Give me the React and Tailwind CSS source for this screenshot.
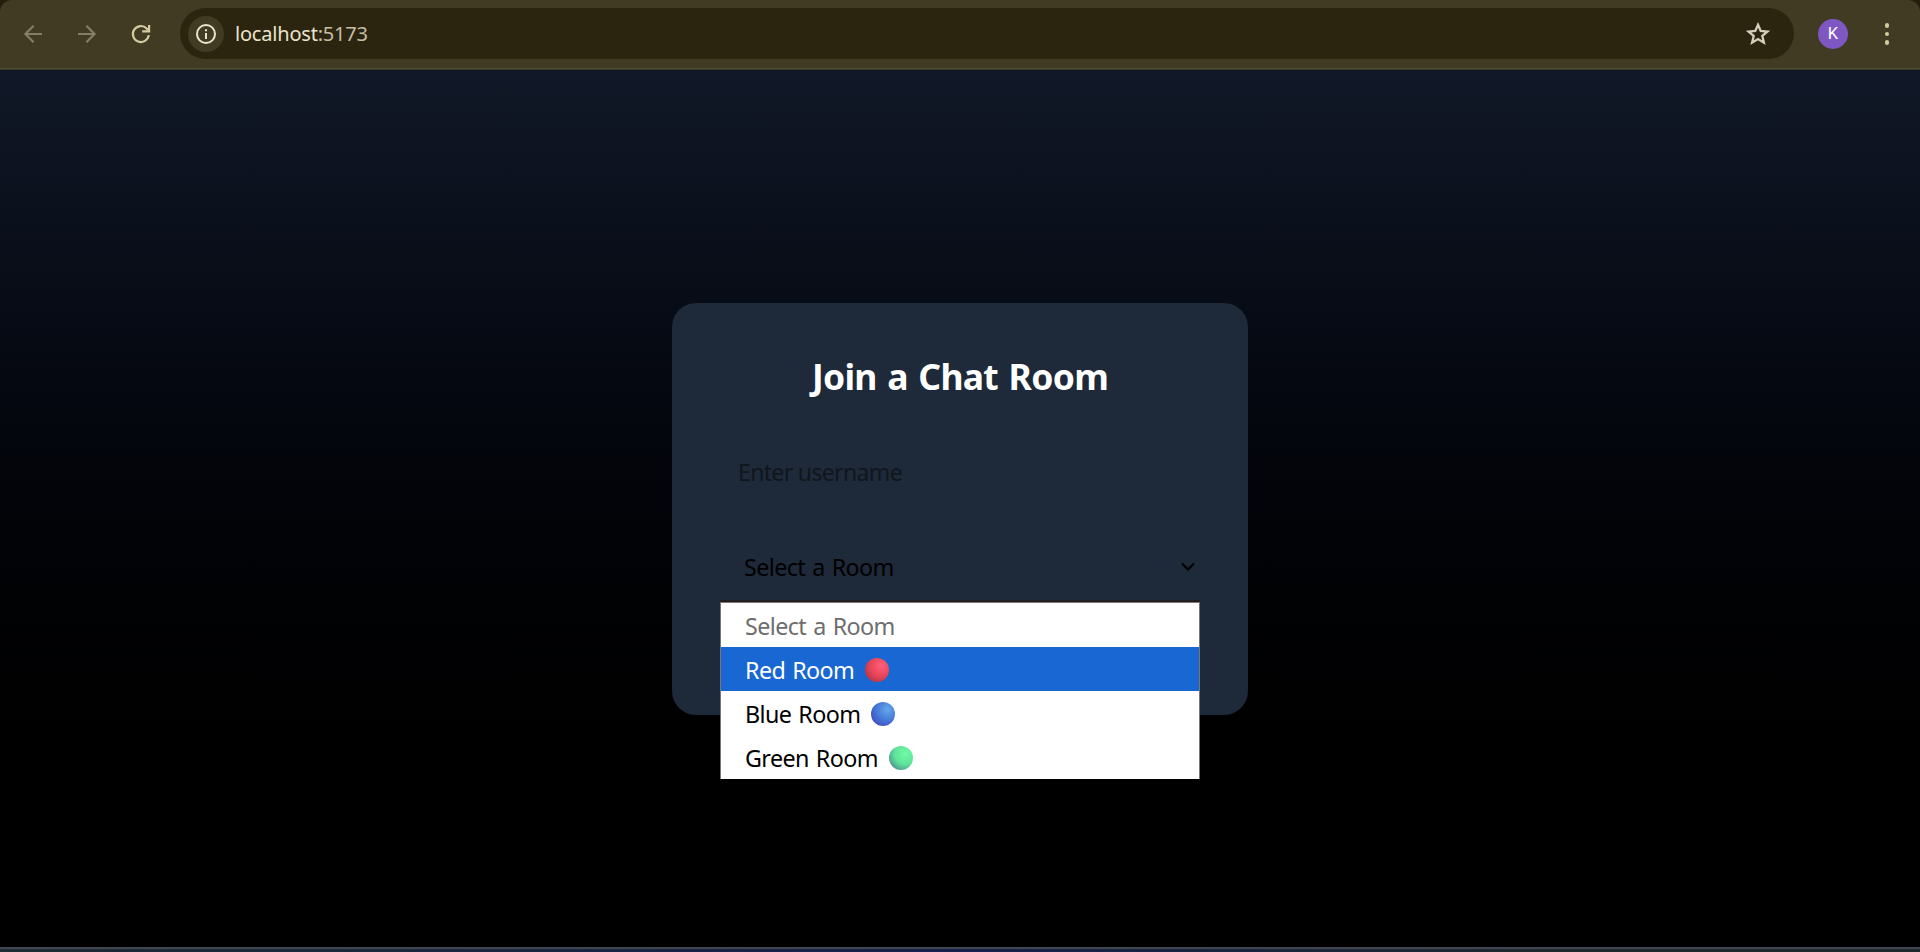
import React from "react";

const rooms = [
  { name: "Red Room", ball: "red" },
  { name: "Blue Room", ball: "blue" },
  { name: "Green Room", ball: "green" },
];

function Ball({ kind }) {
  const colours = {
    red: ["#ff6078", "#e8455a", "#b8364a"],
    blue: ["#64a8ea", "#4479d6", "#4450c4"],
    green: ["#72fba4", "#5fe39a", "#4f9a90"],
  }[kind];
  return (
    <svg width="24" height="24" viewBox="0 0 24 24" className="shrink-0">
      <defs>
        <radialGradient id={kind} cx="0.68" cy="0.32" r="0.75">
          <stop offset="0" stopColor={colours[0]} />
          <stop offset="0.6" stopColor={colours[1]} />
          <stop offset="1" stopColor={colours[2]} />
        </radialGradient>
      </defs>
      <circle cx="12" cy="12" r="12" fill={`url(#${kind})`} />
    </svg>
  );
}

function Toolbar() {
  return (
    <div className="h-[70px] shrink-0 bg-[#241f0d]">
      <header className="flex h-[69px] items-center rounded-t-[12px] border-b border-[#4c4a3c] bg-[#413b24] pl-[19px]">
        <svg width="28" height="28" viewBox="0 0 28 28" fill="none" stroke="#857d64" strokeWidth="2.2" className="mr-[26px]">
          <path d="M23 14H6.5M14.6 5.7 6.4 14 14.6 22.3" />
        </svg>
        <svg width="28" height="28" viewBox="0 0 28 28" fill="none" stroke="#857d64" strokeWidth="2.2" className="mr-[26px]">
          <path d="M5 14H21.5M13.4 5.7 21.6 14 13.4 22.3" />
        </svg>
        <svg width="28" height="28" viewBox="0 0 28 28" fill="none" stroke="#d4caa0" strokeWidth="2.2" className="mr-[25px]">
          <path d="M21.8 15.2A8 8 0 1 1 19.6 8.4L21.8 10.8" />
          <path d="M22.1 5V11.4H15.2" />
        </svg>
        <div className="mb-px flex h-[51px] w-[1614px] items-center rounded-full bg-[#2b250f] pt-px pl-2">
          <span className="flex size-9 items-center justify-center rounded-full bg-[#413b24]">
            <svg width="20" height="20" viewBox="0 0 20 20" fill="none" stroke="#eae3cd" strokeWidth="2">
              <circle cx="10" cy="10" r="9" />
              <path d="M10 9V15M10 5.2V7.2" />
            </svg>
          </span>
          <span className="ml-[11px] flex-1 font-['Noto_Sans',sans-serif] text-[20px] tracking-[-0.2px] text-[#eae3cd]">
            localhost<span className="text-[#c5bea4]">:5173</span>
          </span>
          <svg width="26" height="26" viewBox="0 0 26 26" fill="none" stroke="#d5cebd" strokeWidth="2.3" className="mr-[23px]">
            <path d="M13 3.8 15.7 10 22.4 10.6 17.3 15 18.9 21.7 13 18.1 7.1 21.7 8.7 15 3.6 10.6 10.3 10Z" />
          </svg>
        </div>
        <span className="ml-6 flex size-[30px] items-center justify-center rounded-full bg-[#7e57c2] font-[Roboto,sans-serif] text-[16.5px] text-white">
          K
        </span>
        <span className="ml-[37px] flex flex-col gap-1">
          <i className="size-[4.4px] rounded-full bg-[#d4caa0]" />
          <i className="size-[4.4px] rounded-full bg-[#d4caa0]" />
          <i className="size-[4.4px] rounded-full bg-[#d4caa0]" />
        </span>
      </header>
      <div className="h-px bg-[#413b24]" />
    </div>
  );
}

export default function App() {
  return (
    <div className="flex h-[952px] w-full flex-col overflow-hidden bg-black">
      <Toolbar />
      <main className="flex flex-1 justify-center bg-linear-to-b from-[#111827] to-black pt-[233px] font-['Noto_Sans',sans-serif]">
        <section className="h-[412px] w-[576px] rounded-3xl bg-[#1e2939] px-12 pt-[47px]">
          <h1 className="text-center text-[35.5px] leading-[53px] font-bold tracking-[-0.7px] [word-spacing:2px] text-white">
            Join a Chat Room
          </h1>
          <div className="mt-[39px] flex h-[60px] items-center pl-[18px] text-[23px] tracking-[-0.65px] text-[#10161d]">
            Enter username
          </div>
          <div className="relative mt-[35px] flex h-[60px] items-center justify-between pr-1 pl-6 text-[23.3px] tracking-[-0.6px] [word-spacing:1.6px] text-black">
            Select a Room
            <svg width="16" height="16" viewBox="0 0 16 16" fill="none" stroke="black" strokeWidth="2.2">
              <path d="M2 4.5 8 10.5 14 4.5" />
            </svg>
            <div className="absolute top-[63px] left-0 w-[480px] border-t-2 border-[#231f1f]">
              <ul className="border border-b-0 border-[#767676] bg-white">
                <li className="flex h-11 items-center pt-0.5 pl-6 text-[#6d6d6d]">Select a Room</li>
                {rooms.map((room, i) => (
                  <li
                    key={room.name}
                    className={i === 0 ? "flex h-11 items-center gap-[11px] bg-[#1967d2] pt-0.5 pl-6 text-white" : "flex h-11 items-center gap-[11px] pt-0.5 pl-6"}
                  >
                    {room.name}
                    <Ball kind={room.ball} />
                  </li>
                ))}
              </ul>
            </div>
          </div>
        </section>
      </main>
      <div className="h-[5px] shrink-0 bg-[#414650] pt-0.5">
        <div className="h-[3px] bg-linear-to-r from-[#1f2c33] via-[#16204c] to-[#20292e] to-80%" />
      </div>
    </div>
  );
}
